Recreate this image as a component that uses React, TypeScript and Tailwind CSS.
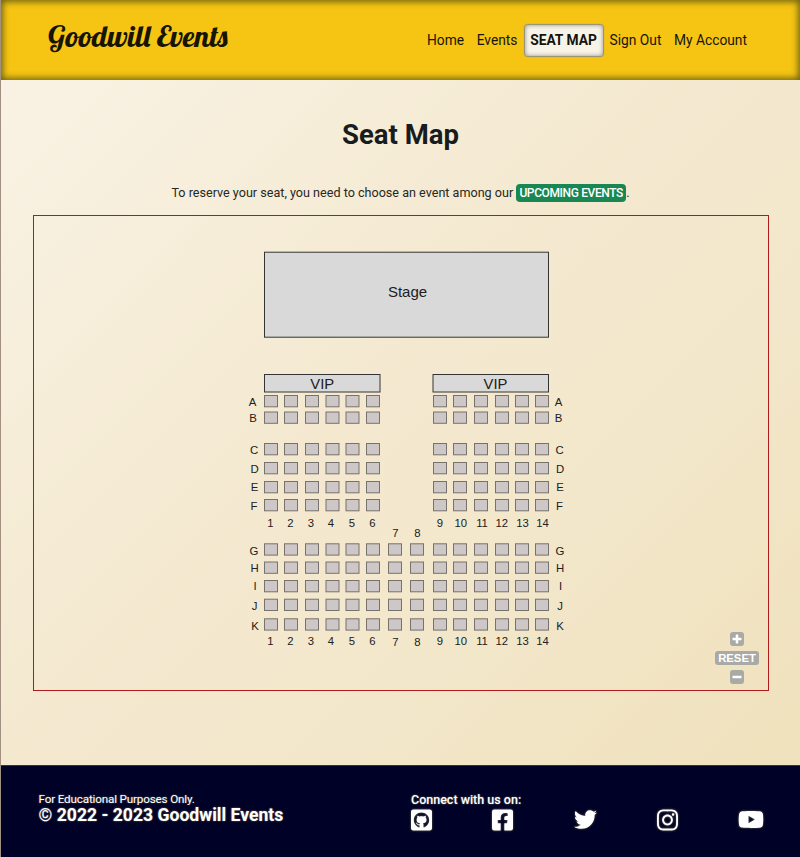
import { FaGithubSquare, FaFacebookSquare, FaTwitter, FaInstagram, FaYoutube } from "react-icons/fa";

const columns = [264.5, 284.5, 305.5, 326, 346, 366.5, 388.5, 410.5, 433.5, 453.5, 474.5, 495.5, 515.5, 535.5];
const rows = [
  { name: "A", y: 395.5, label: 405.5, left: 252.5, right: 558.5 },
  { name: "B", y: 412, label: 422, left: 253, right: 558.5 },
  { name: "C", y: 443.5, label: 454, left: 254, right: 559.5 },
  { name: "D", y: 462.5, label: 473, left: 254.5, right: 560 },
  { name: "E", y: 481.5, label: 491, left: 254.5, right: 560 },
  { name: "F", y: 499.5, label: 510, left: 254, right: 559.5 },
  { name: "G", y: 543.8, label: 554.5, left: 254, right: 560 },
  { name: "H", y: 562, label: 571.5, left: 254.5, right: 560 },
  { name: "I", y: 580.5, label: 589.5, left: 255, right: 560.5 },
  { name: "J", y: 599.2, label: 610, left: 254.5, right: 560 },
  { name: "K", y: 618.8, label: 629.5, left: 255, right: 560 },
];
const numberX = [270.5, 290.5, 311, 331, 352, 372.5, 395.5, 417.5, 440, 460.8, 482, 501.8, 522.5, 542.5];

function SeatMap() {
  return (
    <svg className="block h-full w-full" viewBox="34 216 734 474" fontFamily="Liberation Sans, Arial, sans-serif" fill="#202020" textAnchor="middle">
      <rect x="264.5" y="252.2" width="284" height="85" fill="#d9d9d9" stroke="#343434" />
      <text x="407.5" y="297.3" fontSize="15">Stage</text>
      {[264.5, 433].map((x) => (
        <g key={x}>
          <rect x={x} y="374.5" width="115.5" height="17.5" fill="#d9d9d9" stroke="#343434" />
          <text x={x === 433 ? 495.5 : 322.3} y="389.2" fontSize="14.8">VIP</text>
        </g>
      ))}
      {rows.map((row, r) => (
        <g key={row.name}>
          {columns.map((x, c) =>
            r < 6 && (c === 6 || c === 7) ? null : (
              <rect key={c} x={x} y={row.y} width="13" height="11.3" fill="#cdc7c8" stroke="#77726b" />
            )
          )}
          <text x={row.left} y={row.label} fontSize="11.4">{row.name}</text>
          <text x={row.right} y={row.label} fontSize="11.4">{row.name}</text>
        </g>
      ))}
      {numberX.map((x, i) => (
        <g key={i} fontSize="11.3">
          <text x={x} y={i === 6 || i === 7 ? 537.3 : 527}>{i + 1}</text>
          <text x={x} y={i === 6 || i === 7 ? 646.2 : 645.3}>{i + 1}</text>
        </g>
      ))}
    </svg>
  );
}

const navText = "whitespace-nowrap text-[13.8px] leading-5 text-[#17150b]";
const halo = "[text-shadow:0_0_2px_#77775f]";
const icon = "[filter:drop-shadow(0_0_1px_#66664f)]";

export default function App() {
  return (
    <div className="flex h-[857px] w-[800px] flex-col overflow-hidden border-l border-[#a18f80] bg-[linear-gradient(135deg,#faf4e7_0%,#f4e9d0_45%,#f3e7cb_65%,#efe0b9_100%)] font-['Roboto',sans-serif]">
      <header className="flex h-20 shrink-0 items-center justify-between bg-[#f6c413] pr-[53px] pl-[47px] shadow-[inset_0_0_6px_2px_#6e6510]">
        <svg className="h-12 w-[184px] overflow-visible" viewBox="0 0 184 48" aria-label="Goodwill Events">
          <text x="0" y="31" fontFamily="Lobster, Liberation Serif, serif" fontSize="30" textLength="179.5" lengthAdjust="spacingAndGlyphs" fill="#171404">Goodwill Events</text>
        </svg>
        <nav className="flex items-center">
          <a className={`${navText} mr-[12.5px]`}>Home</a>
          <a className={`${navText} mr-[7px]`}>Events</a>
          <a className="mr-[7px] flex h-[31px] w-[78px] items-center justify-center rounded-[3px] bg-[#f8f3e7] text-[13.8px] font-bold whitespace-nowrap text-[#15130f] shadow-[0_0_1px_1px_#918f81,inset_0_0_4px_#8c8c8c]">SEAT MAP</a>
          <a className={`${navText} mr-[12.5px]`}>Sign Out</a>
          <a className={navText}>My Account</a>
        </nav>
      </header>
      <main className="flex flex-1 flex-col items-center">
        <h1 className="mt-[37px] text-[27.5px] leading-[36px] font-bold text-[#171c20]">Seat Map</h1>
        <p className="mt-[30px] flex h-5 items-center text-[12.6px] whitespace-nowrap text-[#282722]">
          To reserve your seat, you need to choose an event among our
          <a className="ml-[3px] flex h-[18px] w-[110px] items-center justify-center rounded-[4px] bg-[#198754] text-[12px] font-medium tracking-[-0.38px] text-white">UPCOMING EVENTS</a>.
        </p>
        <section className="relative mt-3 ml-px h-[476px] w-[736px] border border-[#b01c1c]">
          <SeatMap />
          <div className="absolute right-[9px] bottom-[6px] flex w-[44px] flex-col items-center gap-[5px] font-['Liberation_Sans',Arial,sans-serif] text-white">
            <button className="flex h-[14px] w-[14px] items-center justify-center rounded-[3px] bg-[#a9a9a6]" aria-label="Zoom in"><svg viewBox="0 0 14 14" className="size-[14px]"><path d="M7 2.5v9M2.5 7h9" stroke="white" strokeWidth="2.5" /></svg></button>
            <button className="flex h-[14px] w-[44px] items-center justify-center rounded-[3px] bg-[#a9a9a6] text-[11.3px] leading-[14px] font-bold">RESET</button>
            <button className="flex h-[14px] w-[14px] items-center justify-center rounded-[3px] bg-[#a9a9a6]" aria-label="Zoom out"><svg viewBox="0 0 14 14" className="size-[14px]"><path d="M2.5 7h9" stroke="white" strokeWidth="2.5" /></svg></button>
          </div>
        </section>
      </main>
      <footer className="flex h-[92px] shrink-0 border-t border-[#35352e] bg-[#000126] pt-[26px] pl-[37.5px] text-white">
        <div className={`w-[372.5px] ${halo}`}>
          <p className="text-[11.7px] leading-[14px] tracking-[-0.17px]">For Educational Purposes Only.</p>
          <p className="text-[17.6px] leading-[19px] font-bold">© 2022 - 2023 Goodwill Events</p>
        </div>
        <div className="w-[353px]">
          <p className={`text-[12.5px] leading-[15px] font-medium ${halo}`}>Connect with us on:</p>
          <div className="flex h-[25px] items-center justify-between">
            <FaGithubSquare className={`h-6 w-[21px] ${icon}`} />
            <FaFacebookSquare className={`h-6 w-[21px] ${icon}`} />
            <FaTwitter className={`size-[23px] ${icon}`} />
            <FaInstagram className={`h-6 w-[21px] ${icon}`} />
            <FaYoutube className={`h-[23px] w-[26px] ${icon}`} />
          </div>
        </div>
      </footer>
    </div>
  );
}
